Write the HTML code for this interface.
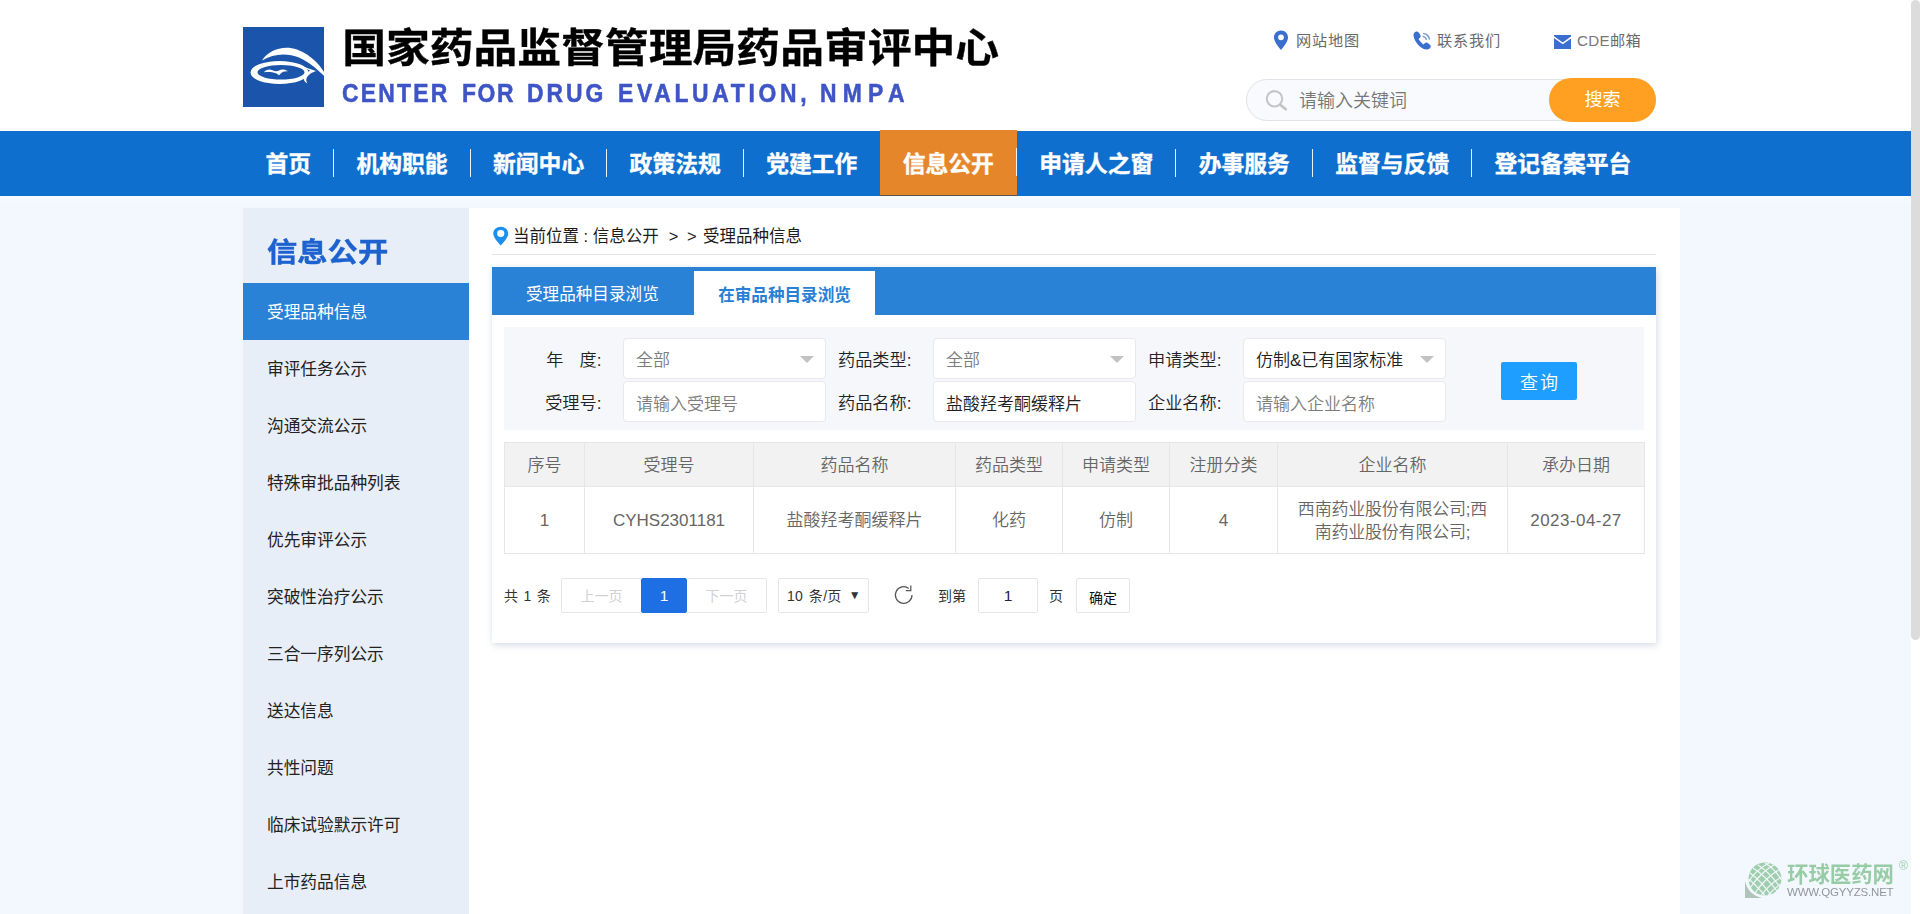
<!DOCTYPE html>
<html lang="zh-CN">
<head>
<meta charset="utf-8">
<title>国家药品监督管理局药品审评中心</title>
<style>
*{box-sizing:border-box;margin:0;padding:0}
html,body{width:1920px;height:914px;overflow:hidden}
body{position:relative;background:#f3f7fe;font-family:"Liberation Sans","Noto Sans CJK SC",sans-serif;color:#333;font-size:16px}
.abs{position:absolute}
.t{position:absolute;white-space:nowrap;line-height:1}
/* header */
#hdr{position:absolute;left:0;top:0;width:1911px;height:131px;background:#fff}
#logo{position:absolute;left:243px;top:27px;width:81px;height:80px;background:#1b55ab;overflow:visible}
#title{left:342.2px;top:26.3px;font-size:43.8px;font-weight:700;color:#000;letter-spacing:0;-webkit-text-stroke:.4px #000;transform:scaleY(.915);transform-origin:50% 50%}
#etitle{left:343px;top:80px;width:600px;height:30px;font-size:26px;font-weight:700;color:#3f55c6}
#etitle span{position:absolute;top:0;-webkit-text-stroke:.55px #3f55c6;transform:scaleX(.88);transform-origin:0 0;white-space:nowrap}
.toplink{font-size:15.2px;color:#6a6a6a;letter-spacing:.8px;font-weight:400;margin-top:.8px}
#search{position:absolute;left:1246px;top:79px;width:410px;height:42px;border:1px solid #dfe3e8;border-radius:21px;background:#f8fafd}
#sbtn{position:absolute;left:1549px;top:78px;width:107px;height:44px;border-radius:22px;background:#ffa022;color:#fff;font-size:18px;text-align:center;line-height:44px}
/* nav */
#nav{position:absolute;left:0;top:131px;width:1911px;height:65px;background:#0f6fce}
#navin{position:absolute;left:242.8px;top:0;height:65px;display:flex}
.ni{position:relative;height:65px;padding:0 22.7px;color:#fff;font-weight:700;font-size:22.8px;line-height:66px;white-space:nowrap;-webkit-text-stroke:.35px #fff}
.ni:after{content:"";position:absolute;right:-.5px;top:18px;width:1px;height:28px;background:#fff;opacity:.9}
.ni:last-child:after{display:none}
.ni.on{background:#e5862b;margin-top:-1px;height:65px;box-shadow:0 1px 0 #555;line-height:68px;z-index:2}
#navfade{position:absolute;left:0;top:196px;width:1911px;height:8px;background:linear-gradient(#f8fbff,#f3f7fe)}
/* main */
#white{position:absolute;left:469px;top:208px;width:1211px;height:706px;background:#fff}
#side{position:absolute;left:243px;top:208px;width:226px;height:706px;background:#e8eef7}
#side h2{position:absolute;left:24px;top:30px;font-size:30.3px;font-weight:700;color:#1d62cf;line-height:1;white-space:nowrap;-webkit-text-stroke:.45px #1d62cf;transform:scaleY(.91);transform-origin:50% 50%}
.si{position:absolute;left:0;width:226px;height:57px;padding-left:24px;padding-top:1.2px;font-size:16.7px;line-height:57px;color:#222;white-space:nowrap;font-weight:400}
.si.on{background:#2a82d7;color:#fff}
#crumb{left:513px;top:227.3px;font-size:16.5px;color:#1c1c1c;font-weight:400;margin-top:.6px}
#crumbline{position:absolute;left:492px;top:254px;width:1164px;height:1px;background:#e4e4e4}
#card{position:absolute;left:492px;top:267px;width:1164px;height:376px;background:#fff;box-shadow:1px 2px 7px rgba(120,140,180,.33)}
#tabbar{position:absolute;left:0;top:0;width:1164px;height:48px;background:#2a82d7}
#tab1{left:34px;top:20.2px;color:#fff;font-size:16.6px;font-weight:400}
#tab2{position:absolute;left:202px;top:4px;width:181px;height:44px;background:#fff;color:#2a7fd4;font-weight:700;font-size:16.6px;text-align:center;line-height:49px;white-space:nowrap}
#filt{position:absolute;left:12px;top:60px;width:1140px;height:103px;background:#f5f7fa}
.lab{position:absolute;width:109.5px;text-align:right;font-size:17.2px;color:#222;line-height:40px;white-space:nowrap;font-weight:350}
.box{position:absolute;width:202.5px;height:40.5px;background:#fff;border:1px solid #e9e9e9;border-radius:4px;font-size:17px;line-height:40px;padding-left:12px;padding-top:2.4px;white-space:nowrap;font-weight:350;color:#222}
.box.ph{color:#7d7d7d}
.box .arr{position:absolute;right:11px;top:16.5px;width:0;height:0;border:7px solid transparent;border-top:7px solid #c2c2c2;border-bottom:0}
#qbtn{position:absolute;left:1009px;top:95px;width:76px;height:38px;background:#1e9fff;color:#fff;border-radius:2px;font-size:18px;text-align:center;line-height:38px;letter-spacing:2.2px;padding-left:2.2px;padding-top:1.5px;font-weight:350}
table{position:absolute;left:12px;top:175px;border-collapse:collapse;table-layout:fixed;width:1140px}
td,th{border:1px solid #e6e6e6;text-align:center;font-size:17px;color:#666;font-weight:350;vertical-align:middle;line-height:23px;padding:0}
th{height:44px;background:#f2f2f2;padding-top:2px}
td{height:67px;padding-top:1px}
.pg{position:absolute;top:311px;height:35px;border:1px solid #e6e6e6;border-radius:2px;background:#fff;font-size:14px;line-height:34px;text-align:center;white-space:nowrap;color:#333}
.pt{top:322px;font-size:14px;color:#333}
/* scrollbar */
#sbtrack{position:absolute;left:1911px;top:0;width:9px;height:914px;background:#fff}
#sbthumb{position:absolute;left:1911px;top:0;width:9px;height:640px;background:#dcdcdc;border-radius:5px}
</style>
</head>
<body>
<div id="hdr">
  <div id="logo">
    <svg width="100" height="80" viewBox="0 0 100 80" style="position:absolute;left:0;top:0;overflow:visible;filter:blur(.35px)">
      <path d="M19 33.500C25 23.500 40 17.500 54 22.500C68 27.500 80 40 85.500 53.500C78 45.500 68 36 56 30.500C44 25.500 30 26.500 19 33.500Z" fill="#fff"/>
      <path fill-rule="evenodd" d="M7.500 45.500a29 11.500 0 1 0 58 0a29 11.500 0 1 0-58 0ZM14.500 45.300a23.500 7.300 0 1 0 47 0a23.500 7.300 0 1 0-47 0Z" fill="#fff"/>
      <path d="M58 38.500C63 40.500 68 42.500 73 44C68 45.500 64.500 48.500 63.500 51.500C63 53.500 63.500 55 64.500 56.500C62 55.500 60.500 53.500 60.800 51C61.200 47.500 64 45 67 43.800Z" fill="#fff"/>
      <path d="M21 45.200C23 42.500 26.500 41.800 29.500 43.200C31.500 44.100 33.500 44.600 35.500 43.700C38 42.200 41.500 41.800 45 44.300C42 43.900 39.500 44.800 37.800 46.500C37 47.300 36.500 48 36 48.200C35 47.800 34.500 46.800 33 46.200C29.500 44.900 25 44.700 21 45.200Z" fill="#fff"/>
    </svg>
  </div>
  <div class="t" id="title">国家药品监督管理局药品审评中心</div>
  <div class="t" id="etitle"><span style="left:-0.9px;letter-spacing:2.55px">CENTER</span> <span style="left:118.5px;letter-spacing:1.8px">FOR</span> <span style="left:184.2px;letter-spacing:3.4px">DRUG</span> <span style="left:274.8px;letter-spacing:4.2px">EVALUATION,</span> <span style="left:477.3px;letter-spacing:7.1px">NMPA</span></div>
  <svg class="abs" style="left:1273px;top:30px" width="16" height="21" viewBox="0 0 16 21"><path d="M8 .5C3.9.5 1 3.5 1 7.4c0 4.400 5.200 10.400 7 12.600 1.800-2.200 7-8.200 7-12.600C15 3.500 12.100.5 8 .5zm0 9.700a2.900 2.900 0 1 1 0-5.800 2.900 2.900 0 0 1 0 5.800z" fill="#3a6fd0"/></svg>
  <div class="t toplink" style="left:1296px;top:32px">网站地图</div>
  <svg class="abs" style="left:1411px;top:30px" width="22" height="21" viewBox="0 0 22 21"><path d="M5.200 1.600C3.800 1.900 2.400 3.300 2.500 5.200C2.900 9.800 6.200 15.200 11.800 18.400C13.900 19.600 16.600 19.900 18.600 18.400C19.800 17.500 20.200 16 19.300 15L16.600 12.900C15.800 12.300 14.700 12.400 14 13.100L12.700 14.400C10.600 13.200 8.600 11 7.600 8.900L9 7.700C9.800 7 9.900 5.900 9.400 5.100L7.500 2.300C7 1.600 6 1.300 5.200 1.600Z" fill="#3a6fd0"/><path d="M12.200 6.400c1.600.3 2.700 1.400 3.100 3M12.700 3.400c3 .5 5.200 2.700 5.800 5.700" fill="none" stroke="#7f9bd0" stroke-width="1.500" stroke-linecap="round"/></svg>
  <div class="t toplink" style="left:1437px;top:32px">联系我们</div>
  <svg class="abs" style="left:1553.5px;top:34.5px" width="17.5" height="14" viewBox="0 0 19 15"><path d="M0 1.200 9.500 8 19 1.200V0H0z" fill="#3a6fd0"/><path d="M0 3.200V15h19V3.200L9.500 10z" fill="#3a6fd0"/></svg>
  <div class="t toplink" style="left:1577px;top:32px;letter-spacing:.4px"><span style="letter-spacing:.3px;color:#777">CDE</span>邮箱</div>
  <div id="search">
    <svg class="abs" style="left:17px;top:8px" width="26" height="26" viewBox="0 0 26 26"><circle cx="10.500" cy="10.800" r="7.700" fill="none" stroke="#c6c6c6" stroke-width="2.100"/><path d="M16.500 17l5.300 4.300" stroke="#c3c3c3" stroke-width="2.600" stroke-linecap="round"/></svg>
    <div class="t" style="left:52px;top:11px;font-size:18px;color:#777;font-weight:350;margin-top:.8px">请输入关键词</div>
  </div>
  <div id="sbtn">搜索</div>
</div>
<div id="nav"><div id="navin">
  <div class="ni">首页</div><div class="ni">机构职能</div><div class="ni">新闻中心</div><div class="ni">政策法规</div><div class="ni">党建工作</div><div class="ni on">信息公开</div><div class="ni">申请人之窗</div><div class="ni">办事服务</div><div class="ni">监督与反馈</div><div class="ni">登记备案平台</div>
</div></div>
<div id="navfade"></div>

<div id="white"></div>
<div id="side">
  <h2>信息公开</h2>
  <div class="si on" style="top:75px">受理品种信息</div>
  <div class="si" style="top:132px">审评任务公示</div>
  <div class="si" style="top:189px">沟通交流公示</div>
  <div class="si" style="top:246px">特殊审批品种列表</div>
  <div class="si" style="top:303px">优先审评公示</div>
  <div class="si" style="top:360px">突破性治疗公示</div>
  <div class="si" style="top:417px">三合一序列公示</div>
  <div class="si" style="top:474px">送达信息</div>
  <div class="si" style="top:531px">共性问题</div>
  <div class="si" style="top:588px">临床试验默示许可</div>
  <div class="si" style="top:645px">上市药品信息</div>
</div>

<svg class="abs" style="left:491.500px;top:225.500px" width="17.500" height="20.500" viewBox="0 0 17 21" preserveAspectRatio="none"><path d="M8.500.8C4.300.8 1.200 3.900 1.200 7.800c0 4.300 5.300 10 7.300 12.200 2-2.200 7.300-7.900 7.300-12.200C15.800 3.900 12.700.8 8.500.8zm0 10.400a3.500 3.500 0 1 1 0-7 3.500 3.500 0 0 1 0 7z" fill="#1e8fef"/></svg>
<div class="t" id="crumb">当前位置 : 信息公开<span style="margin-left:10px">&gt;</span><span style="margin-left:8.5px">&gt;</span><span style="margin-left:6.5px">受理品种信息</span></div>
<div id="crumbline"></div>

<div id="card">
  <div id="tabbar"></div>
  <div class="t" id="tab1">受理品种目录浏览</div>
  <div id="tab2">在审品种目录浏览</div>
  <div id="filt"></div>
  <div class="lab" style="left:0;top:73px">年<span style="display:inline-block;width:16px"></span>度:</div>
  <div class="box ph" style="left:131px;top:71px">全部<i class="arr"></i></div>
  <div class="lab" style="left:310px;top:73px">药品类型:</div>
  <div class="box ph" style="left:441px;top:71px">全部<i class="arr"></i></div>
  <div class="lab" style="left:620px;top:73px">申请类型:</div>
  <div class="box" style="left:751px;top:71px">仿制&amp;已有国家标准<i class="arr"></i></div>
  <div class="lab" style="left:0;top:116px">受理号:</div>
  <div class="box ph" style="left:131px;top:114.3px">请输入受理号</div>
  <div class="lab" style="left:310px;top:116px">药品名称:</div>
  <div class="box" style="left:441px;top:114.3px">盐酸羟考酮缓释片</div>
  <div class="lab" style="left:620px;top:116px">企业名称:</div>
  <div class="box ph" style="left:751px;top:114.3px">请输入企业名称</div>
  <div id="qbtn">查询</div>
  <table>
    <colgroup><col style="width:80px"><col style="width:169px"><col style="width:202px"><col style="width:107px"><col style="width:107px"><col style="width:108px"><col style="width:230px"><col style="width:137px"></colgroup>
    <tr><th>序号</th><th>受理号</th><th>药品名称</th><th>药品类型</th><th>申请类型</th><th>注册分类</th><th>企业名称</th><th>承办日期</th></tr>
    <tr><td>1</td><td>CYHS2301181</td><td>盐酸羟考酮缓释片</td><td>化药</td><td>仿制</td><td>4</td><td style="letter-spacing:-.2px">西南药业股份有限公司;西<br>南药业股份有限公司;</td><td style="letter-spacing:.45px">2023-04-27</td></tr>
  </table>
  <div class="t pt" style="left:12px;word-spacing:1.6px">共 1 条</div>
  <div class="pg" style="left:69px;width:81px;color:#d2d2d2">上一页</div>
  <div class="pg" style="left:149px;width:46px;background:#1e6fe3;border-color:#1e6fe3;color:#fff;border-radius:2px;font-size:15.5px">1</div>
  <div class="pg" style="left:195px;width:80px;color:#d2d2d2;border-left:0">下一页</div>
  <div class="pg" style="left:286px;width:91px;text-align:left;padding-left:8px;word-spacing:1.5px;letter-spacing:.3px">10 条/页<span style="position:absolute;right:7px;top:-1px;font-size:12px">▼</span></div>
  <svg class="abs" style="left:400.5px;top:316.5px" width="22" height="22" viewBox="0 0 22 22"><path d="M19 11a8.300 8.300 0 1 1-3.200-6.500" fill="none" stroke="#555" stroke-width="1.250"/><path d="M17.800 1.500v5h-5" fill="none" stroke="#555" stroke-width="1.250"/></svg>
  <div class="t pt" style="left:446px">到第</div>
  <div class="pg" style="left:486px;width:60px;font-size:15.5px;color:#223">1</div>
  <div class="t pt" style="left:557px">页</div>
  <div class="pg" style="left:584px;width:54px;font-size:14px;color:#111;padding-top:1.5px">确定</div>
</div>

<!-- watermark -->
<div id="wm" class="abs" style="left:1740px;top:858px;width:170px;height:44px;opacity:.55">
  <svg class="abs" style="left:4px;top:3px" width="40" height="38" viewBox="0 0 40 38">
    <path d="M1 20v17h17C9 35 3 29 1 20z" fill="#7a9a80"/>
    <circle cx="21" cy="18" r="16.500" fill="#5cae6c"/>
    <g stroke="#f3f7fe" stroke-width="1.200" fill="none">
      <path d="M9 7C17 12 27 22 33 30M14 4C22 9 31 19 36 26M6 12C13 17 22 27 27 34M4.500 18C10 22 17 30 21 34.500M21 2C28 6 34 13 37.500 19"/>
      <path d="M30 4C22 8 11 19 6 27M35 9C27 13 16 24 11 32M37.500 16C30 20 22 28 17 34.500M25 2C17 6 8 14 4.500 21M37 23C32 26 27 31 24 34.500"/>
    </g>
  </svg>
  <div class="t" style="left:47px;top:6.5px;font-size:21.4px;font-weight:700;color:#4daa5e">环球医药网</div>
  <div class="t" style="left:47px;top:29px;font-size:11.5px;color:#444;letter-spacing:-.2px">WWW.QGYYZS.NET</div>
  <div class="t" style="left:159px;top:2px;font-size:12px;color:#4daa5e">®</div>
</div>

<div id="sbtrack"></div>
<div id="sbthumb"></div>
</body>
</html>
